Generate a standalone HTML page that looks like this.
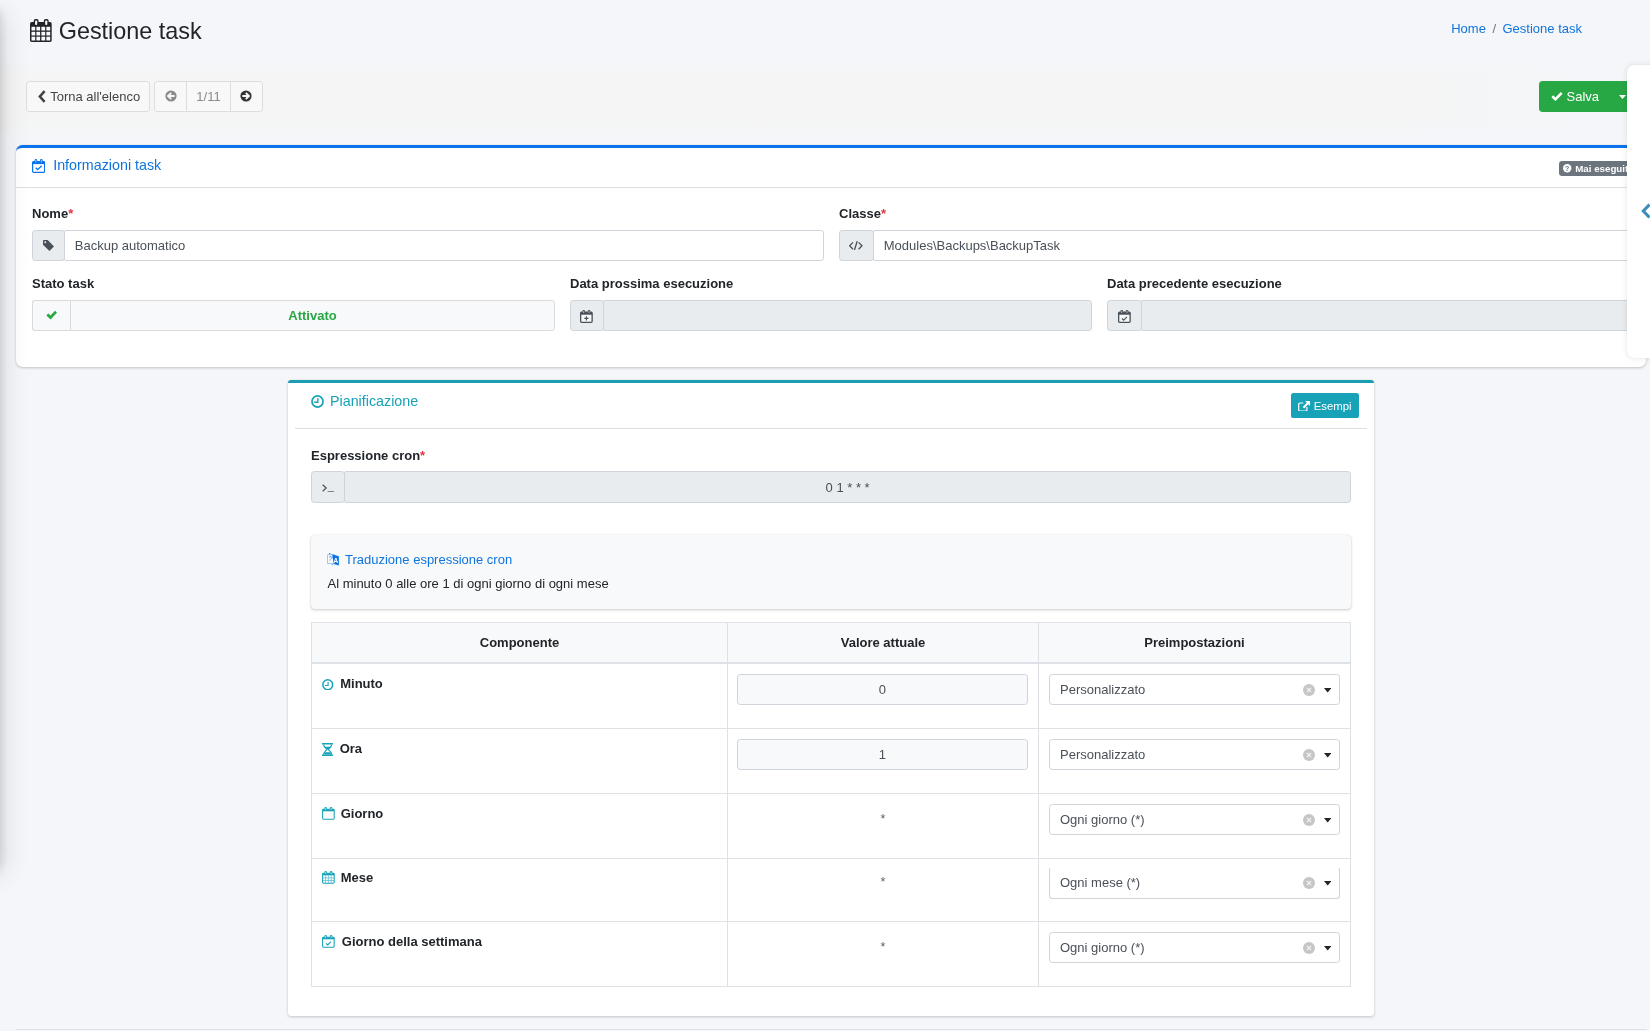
<!DOCTYPE html>
<html lang="it">
<head>
<meta charset="utf-8">
<title>Gestione task</title>
<style>
*{box-sizing:border-box}
html{font-size:13px}
body{margin:0;width:1650px;height:1031px;overflow:hidden;position:relative;background:#f4f6f9;color:#212529;
  font-family:"Liberation Sans",Arial,Helvetica,sans-serif;font-size:13px;line-height:1.5}
a{color:#1074dd;text-decoration:none}
svg{display:block}
.abs{position:absolute}
/* left sidebar shadow */
#sideshadow{z-index:5;position:absolute;left:-250px;top:0;width:250px;height:859px;background:#343a40;
  box-shadow:0 14px 28px rgba(0,0,0,.16),0 10px 10px rgba(0,0,0,.14)}
/* header */
#title{position:absolute;left:30px;top:14px;height:35px;display:flex;align-items:center;font-size:23.4px;line-height:1.2;color:#212529}
#title svg{margin-right:7px;margin-top:-2px}
#crumb{position:absolute;right:68px;top:19px;font-size:13px;line-height:19.5px;white-space:nowrap}
#crumb span{color:#6c757d;padding:0 6.5px}
/* toolbar */
.btn{position:absolute;top:81px;height:31px;border:1px solid #ddd;background:#f8f8f8;color:#444;border-radius:3.25px;
  font-size:13px;line-height:19.5px;padding:4.875px 9.75px;white-space:nowrap;display:flex;align-items:center}
.btn svg{margin-right:4px;flex:none}
/* cards */
.card{position:absolute;background:#fff;border-radius:6.5px;box-shadow:0 0 1px rgba(0,0,0,.125),0 1px 3px rgba(0,0,0,.2)}
.card-title{position:absolute;font-size:14.3px;line-height:1.2;display:flex;align-items:center;white-space:nowrap}
label{position:absolute;font-weight:700;font-size:13px;line-height:19.5px;white-space:nowrap;color:#212529}
label i{color:#dc3545;font-style:normal}
.ig{position:absolute;height:31px;display:flex}
.ig .pre{flex:0 0 auto;background:#e9ecef;border:1px solid #ced4da;border-right:0;border-radius:3.25px 0 0 3.25px;display:flex;align-items:center;justify-content:center;color:#495057}
.ig .pre.r{border-right:1px solid #ced4da;border-radius:3.25px}
.ig .pre.r+.fc{margin-left:-1px;border-radius:2px 3.25px 3.25px 2px}
.ig .fc{flex:1 1 auto;background:#fff;border:1px solid #ced4da;border-radius:0 3.25px 3.25px 0;color:#495057;font-size:13px;line-height:19.5px;padding:4.875px 9.75px;white-space:nowrap;overflow:hidden}
.ig .fc.dis{background:#e9ecef}
</style>
</head>
<body>
<div id="wrap" style="position:absolute;left:0;top:0;width:1650px;height:1031px;will-change:transform;overflow:hidden">
<div id="sideshadow"></div>

<div class="abs" style="left:0;top:62px;width:1650px;height:72px;background:linear-gradient(90deg,#f5f5f5 0,#f5f5f5 84%,#f4f6f9 97%)"><div class="abs" style="left:0;top:0;width:100%;height:14px;background:linear-gradient(180deg,#f4f6f9,rgba(244,246,249,0))"></div><div class="abs" style="left:0;bottom:0;width:100%;height:14px;background:linear-gradient(0deg,#f4f6f9,rgba(244,246,249,0))"></div></div>
<div id="title">
<svg width="21.7" height="23" viewBox="0 0 21.7 23"><rect x="0" y="3" width="21.7" height="20" rx="1.7" fill="#212529"/><g fill="#f9fafc"><rect x="1.5" y="7.8" width="3.7" height="3.7"/><rect x="6.4" y="7.8" width="3.7" height="3.7"/><rect x="11.4" y="7.8" width="3.8" height="3.7"/><rect x="16.4" y="7.8" width="3.8" height="3.7"/><rect x="1.5" y="12.8" width="3.7" height="3.7"/><rect x="6.4" y="12.8" width="3.7" height="3.7"/><rect x="11.4" y="12.8" width="3.8" height="3.7"/><rect x="16.4" y="12.8" width="3.8" height="3.7"/><rect x="1.5" y="17.7" width="3.7" height="3.8"/><rect x="6.4" y="17.7" width="3.7" height="3.8"/><rect x="11.4" y="17.7" width="3.8" height="3.8"/><rect x="16.4" y="17.7" width="3.8" height="3.8"/></g><rect x="3.7" y="0" width="4.9" height="6.6" rx="1.9" fill="#212529"/><rect x="13.8" y="0" width="4.9" height="6.6" rx="1.9" fill="#212529"/><rect x="5.1" y="1.4" width="2.1" height="4.5" rx=".9" fill="#f9fafc"/><rect x="15.2" y="1.4" width="2.1" height="4.5" rx=".9" fill="#f9fafc"/></svg>
<span>Gestione task</span>
</div>
<div id="crumb"><a>Home</a><span>/</span><a>Gestione task</a></div>

<!-- toolbar -->
<div class="btn" style="left:26px;width:123.5px;padding-left:11px"><svg width="8" height="13" viewBox="0 0 8 13" style="margin-right:4.2px;margin-top:-1px"><path d="M6.600 1.200 L1.900 6.500 L6.600 11.800" fill="none" stroke="#444" stroke-width="2.600" stroke-linejoin="miter"/></svg>Torna all'elenco</div>
<div class="btn" style="left:154px;width:33px;border-radius:3.25px 0 0 3.25px;padding:0;justify-content:center"><svg width="12" height="12" viewBox="0 0 12 12" style="margin:-1px 0 0 0"><circle cx="6" cy="6" r="5.6" fill="#8a8a8a"/><path d="M9.6 6H3.4M6.2 2.8 3 6 6.200 9.200" fill="none" stroke="#f8f8f8" stroke-width="1.9"/></svg></div>
<div class="btn" style="left:186px;width:45px;border-radius:0;padding:0;justify-content:center;color:#8a8a8a">1/11</div>
<div class="btn" style="left:230px;width:32.5px;border-radius:0 3.25px 3.25px 0;padding:0;justify-content:center"><svg width="12" height="12" viewBox="0 0 12 12" style="margin:-1px 0 0 0"><circle cx="6" cy="6" r="5.6" fill="#333"/><path d="M2.4 6H8.6M5.800 2.800 9 6 5.800 9.200" fill="none" stroke="#f8f8f8" stroke-width="1.9"/></svg></div>

<div class="btn" style="left:1539px;width:75px;background:#28a745;border-color:#28a745;color:#fff;border-radius:3.25px 0 0 3.25px;padding-left:10.5px"><svg width="12" height="10" viewBox="0 0 12 10" style="margin-right:4px;margin-top:-1px"><path d="M1.3 5.300 4.400 8.300 10.700 1.800" fill="none" stroke="#fff" stroke-width="2.600"/></svg>Salva</div>
<div class="btn" style="left:1613px;width:30px;background:#28a745;border-color:#28a745;border-radius:0 3.25px 3.25px 0;padding:0"><svg width="7" height="4" viewBox="0 0 7 4" style="margin:0 0 0 5px"><path d="M0 0h7L3.500 4z" fill="#fff"/></svg></div>

<!-- card 1 -->
<div class="card" style="left:16px;top:145px;width:1630px;height:222px;border-top:3px solid #0a73eb">
  <div class="card-title" style="left:16px;top:9px;color:#1074dd"><svg width="13.2" height="14" viewBox="0 0 13.2 14" style="margin-right:8px"><rect x=".6" y="2.6" width="12" height="10.8" rx="1" fill="none" stroke="#0a73eb" stroke-width="1.2"/><rect x=".6" y="2.6" width="12" height="2.5" fill="#0a73eb"/><rect x="2.6" y="0" width="2.6" height="4.2" rx="1.2" fill="#0a73eb"/><rect x="8" y="0" width="2.6" height="4.2" rx="1.2" fill="#0a73eb"/><rect x="3.5" y="1" width=".8" height="2.4" rx=".4" fill="#fff" opacity=".8"/><rect x="8.9" y="1" width=".8" height="2.4" rx=".4" fill="#fff" opacity=".8"/><path d="M3.7 8.8 5.7 10.7 9.7 6.7" fill="none" stroke="#0a73eb" stroke-width="1.3"/></svg>Informazioni task</div>
  <div class="abs" style="left:0;top:39px;width:1630px;height:1px;background:rgba(0,0,0,.125)"></div>
  <div class="abs" style="left:1543px;top:13px;height:15px;background:#6c757d;color:#fff;font-weight:700;font-size:9.75px;line-height:15px;border-radius:3.25px;padding:0 5px 0 4.200px;white-space:nowrap;display:flex;align-items:center"><svg width="8.400" height="8.400" viewBox="0 0 9 9" style="margin-right:3.600px"><circle cx="4.500" cy="4.500" r="4.500" fill="#fff"/><text x="4.500" y="7.400" font-size="7.500" font-weight="700" text-anchor="middle" fill="#6c757d" font-family="Liberation Sans, sans-serif">?</text></svg>Mai eseguito</div>

  <label style="left:16px;top:56px">Nome<i>*</i></label>
  <div class="ig" style="left:16px;top:82px;width:792px"><div class="pre r" style="width:33px"><svg width="11" height="11" viewBox="0 0 11 11" style="margin:-1px 0 0 -1px"><path d="M.9 0H4.700L11 6.400 6.400 11 0 4.700V.9Q0 0 .9 0Z" fill="#495057"/><circle cx="2.300" cy="2.300" r=".95" fill="#e9ecef"/></svg></div><div class="fc">Backup automatico</div></div>
  <label style="left:823px;top:56px">Classe<i>*</i></label>
  <div class="ig" style="left:823px;top:82px;width:791px"><div class="pre r" style="width:35px"><svg width="13.6" height="9.8" viewBox="0 0 13.6 9.8" style="margin:0 0 0 -1px"><path d="M4 1.400.6 4.800 4 8.200M9.600 1.400 13 4.800 9.600 8.200M8.200.2 5.300 9.600" fill="none" stroke="#495057" stroke-width="1.3"/></svg></div><div class="fc">Modules\Backups\BackupTask</div></div>

  <label style="left:16px;top:126px">Stato task</label>
  <div class="ig" style="left:16px;top:152px;width:523px"><div class="pre" style="width:38px;background:#f8f9fa;border-color:#d9dadc"><svg width="11.3" height="9.2" viewBox="0 0 11.3 9.2" style="margin:-1px 0 0 0"><path d="M1.300 4.500 4.500 7.500 10 1.700" fill="none" stroke="#28a745" stroke-width="2.700"/></svg></div><div class="fc" style="background:#f8f9fa;border-color:#d9dadc;color:#28a745;font-weight:700;text-align:center">Attivato</div></div>
  <label style="left:554px;top:126px">Data prossima esecuzione</label>
  <div class="ig" style="left:554px;top:152px;width:522px"><div class="pre r" style="width:33.5px"><svg width="12.8" height="13" viewBox="0 0 12.8 13" style="margin-top:1.5px"><rect x=".65" y="2.2" width="11.5" height="10.15" rx="1" fill="#f6f7f9" stroke="#495057" stroke-width="1.3"/><rect x=".65" y="2.2" width="11.5" height="2.5" fill="#495057"/><rect x="2.5" y="0" width="2.5" height="3.8" rx="1.1" fill="#495057"/><rect x="7.8" y="0" width="2.5" height="3.8" rx="1.1" fill="#495057"/><rect x="3.35" y="1" width=".8" height="2.2" rx=".4" fill="#fff" opacity=".75"/><rect x="8.65" y="1" width=".8" height="2.2" rx=".4" fill="#fff" opacity=".75"/><path d="M6.400 6.300v4.200M4.300 8.400h4.200" stroke="#495057" stroke-width="1.100"/></svg></div><div class="fc dis"></div></div>
  <label style="left:1091px;top:126px">Data precedente esecuzione</label>
  <div class="ig" style="left:1091px;top:152px;width:523px"><div class="pre r" style="width:34.5px"><svg width="12.8" height="13" viewBox="0 0 12.8 13" style="margin-top:1.5px"><rect x=".65" y="2.2" width="11.5" height="10.15" rx="1" fill="#f6f7f9" stroke="#495057" stroke-width="1.3"/><rect x=".65" y="2.2" width="11.5" height="2.5" fill="#495057"/><rect x="2.5" y="0" width="2.5" height="3.8" rx="1.1" fill="#495057"/><rect x="7.8" y="0" width="2.5" height="3.8" rx="1.1" fill="#495057"/><rect x="3.35" y="1" width=".8" height="2.2" rx=".4" fill="#fff" opacity=".75"/><rect x="8.65" y="1" width=".8" height="2.2" rx=".4" fill="#fff" opacity=".75"/><path d="M3.900 8.500 5.700 10.200 8.900 6.800" fill="none" stroke="#495057" stroke-width="1.100"/></svg></div><div class="fc dis"></div></div>
</div>

<!-- card 2 -->
<style>
.s2{position:absolute;left:10px;width:290.5px;height:31px;border:1px solid #ced4da;border-radius:3.25px;background:#fff;color:#495057;font-size:13px;line-height:29px;padding-left:10px;white-space:nowrap}
.s2 .clr{position:absolute;left:252.500px;top:9px}
.s2 .car{position:absolute;left:273.500px;top:13.200px}
.tb{position:absolute;left:23px;top:239px;width:1040px;height:365px;border:1px solid #dee2e6}
.tb .r{position:absolute;left:0;width:1038px;border-top:1px solid #dee2e6}
.tb .c{position:absolute;top:0;height:100%}
.tb .c1{left:0;width:416px;border-right:1px solid #dee2e6}
.tb .c2{left:416px;width:311px;border-right:1px solid #dee2e6}
.tb .c3{left:727px;width:311px}
.tb .h{font-weight:700;text-align:center;line-height:39px;color:#212529}
.tb .nm{position:absolute;left:10px;top:10px;font-weight:700;line-height:19.5px;display:flex;align-items:center;white-space:nowrap}
.tb .in{position:absolute;left:9px;top:10px;width:290.5px;height:31px;border:1px solid #ced4da;border-radius:3.25px;background:#f8f9fa;color:#495057;text-align:center;line-height:29px}
.tb .st{position:absolute;left:0;width:100%;top:16.500px;text-align:center;font-size:12.500px;line-height:17px;color:#5a6068}
</style>
<div class="card" style="left:288px;top:380px;width:1086px;height:636px;border-top:3px solid #1a9db3;border-radius:3.250px">
  <div class="card-title" style="left:23px;top:10px;color:#17a2b8"><svg width="13" height="13" viewBox="0 0 13 13" style="margin-right:6px"><circle cx="6.5" cy="6.5" r="5.55" fill="none" stroke="#17a2b8" stroke-width="1.7"/><path d="M6.85 2.99V7.25H3.25" fill="none" stroke="#17a2b8" stroke-width="1.3"/></svg>Pianificazione</div>
  <div class="abs" style="left:1003px;top:10px;width:68px;height:25px;background:#17a2b8;color:#fff;border-radius:2.600px;font-size:11.375px;line-height:25px;white-space:nowrap;display:flex;align-items:center;padding:1.500px 0 0 7px"><svg width="12" height="10.500" viewBox="0 0 12 10.500" style="margin-right:3.700px;margin-top:-1px"><path d="M8.900 6v2.700a1.300 1.300 0 0 1-1.300 1.300H2A1.300 1.300 0 0 1 .7 8.700V3.300A1.300 1.300 0 0 1 2 2h3.300" fill="none" stroke="#fff" stroke-width="1.200"/><path d="M7 0h5v5L10.300 3.300 6.200 7.400 4.700 5.900 8.800 1.800z" fill="#fff"/></svg>Esempi</div>
  <div class="abs" style="left:7px;top:45px;width:1072px;height:1px;background:rgba(0,0,0,.125)"></div>

  <label style="left:23px;top:63px">Espressione cron<i>*</i></label>
  <div class="ig" style="left:23px;top:88px;width:1040px;height:32px"><div class="pre r" style="width:34px"><svg width="12.700" height="8.500" viewBox="0 0 12.700 8.500" style="margin-top:1.500px"><path d="M.7.700 4.200 4 .7 7.300" fill="none" stroke="#495057" stroke-width="1.200"/><path d="M5.600 7.900h6.800" stroke="#495057" stroke-width="1.100"/></svg></div><div class="fc dis" style="text-align:center;padding:5.500px 9.750px 4px 10px">0 1 * * *</div></div>

  <div class="abs" style="left:23px;top:151.500px;width:1040px;height:74.500px;background:#f8f9fa;border-radius:4px;box-shadow:0 0 1px rgba(0,0,0,.125),0 1px 3px rgba(0,0,0,.2)">
    <div class="abs" style="left:16px;top:15.500px;color:#1074dd;line-height:19.500px;white-space:nowrap;display:flex;align-items:center"><svg width="12.200" height="13" viewBox="0 0 12.200 13" style="margin-right:5.800px"><path d="M.5 1.700H7.300V10.500H.5z" fill="none" stroke="#9ec8f4" stroke-width="1"/><path d="M2 0 4.800 1.300H2z" fill="#0a73eb"/><path d="M2 4h3.600M3.800 3v1M2.300 7.300c1.600-.6 2.600-1.700 3-3.300" fill="none" stroke="#5a9fea" stroke-width=".8"/><path d="M5.200 1.300 11.900 3.200V12.600L6.700 11z" fill="#0a73eb"/><text x="8.900" y="10.400" font-size="6.500" font-weight="700" fill="#fff" text-anchor="middle" font-family="Liberation Sans, sans-serif">A</text><path d="M4 11.200 6.700 11 5.600 13z" fill="#9ec8f4"/></svg>Traduzione espressione cron</div>
    <div class="abs" style="left:16.500px;top:39.500px;color:#212529;line-height:19.500px;white-space:nowrap">Al minuto 0 alle ore 1 di ogni giorno di ogni mese</div>
  </div>

  <div class="tb">
    <div class="abs" style="left:0;top:0;width:1038px;height:39px;background:#f8f9fa"></div>
    <div class="c c1"><div class="h">Componente</div></div>
    <div class="c c2"><div class="h">Valore attuale</div></div>
    <div class="c c3"><div class="h">Preimpostazioni</div></div>
    <div class="r" style="top:39px;height:65px;border-top:2px solid #dee2e6"><div class="c c1"><div class="nm"><svg width="11.5" height="11.5" viewBox="0 0 11.5 11.5" style="margin-top:1px;margin-right:6.7px"><circle cx="5.75" cy="5.75" r="4.90" fill="none" stroke="#17a2b8" stroke-width="1.5"/><path d="M6.10 2.65V6.50H2.88" fill="none" stroke="#17a2b8" stroke-width="1.1"/></svg>Minuto</div></div><div class="c c2"><div class="in">0</div></div><div class="c c3"><div class="s2" style="top:10px">Personalizzato<svg class="clr" width="12" height="12" viewBox="0 0 12 12"><circle cx="6" cy="6" r="6" fill="#c6c6c6"/><path d="M3.900 3.900 8.100 8.100M8.100 3.900 3.900 8.100" stroke="#f4f4f4" stroke-width="1.300"/></svg><svg class="car" width="7.400" height="4.600" viewBox="0 0 7.400 4.600"><path d="M0 0h7.400L3.700 4.600z" fill="#212529"/></svg></div></div></div>
    <div class="r" style="top:105px;height:65px"><div class="c c1"><div class="nm" style="top:10px"><svg width="11.300" height="13" viewBox="0 0 11.300 13" style="margin-right:6.400px;margin-top:1px"><path d="M0 0h11.300v1.400H0zM0 11.600h11.300V13H0z" fill="#17a2b8"/><path d="M1.700 1.400c0 2.700 2.500 3.700 3.100 5.100-.6 1.400-3.100 2.400-3.100 5.100M9.600 1.400c0 2.700-2.500 3.700-3.100 5.100.6 1.400 3.100 2.400 3.100 5.100" fill="none" stroke="#17a2b8" stroke-width="1.200"/><path d="M2.300 3.700h6.700C8.300 5 6.600 5.600 5.650 6.700 4.700 5.600 3 5 2.300 3.700zM1.900 11.600c.2-1.100.8-1.800 1.500-2.400h4.500c.7.600 1.300 1.300 1.500 2.400z" fill="#17a2b8"/></svg>Ora</div></div><div class="c c2"><div class="in">1</div></div><div class="c c3"><div class="s2" style="top:10px">Personalizzato<svg class="clr" width="12" height="12" viewBox="0 0 12 12"><circle cx="6" cy="6" r="6" fill="#c6c6c6"/><path d="M3.900 3.900 8.100 8.100M8.100 3.900 3.900 8.100" stroke="#f4f4f4" stroke-width="1.300"/></svg><svg class="car" width="7.400" height="4.600" viewBox="0 0 7.400 4.600"><path d="M0 0h7.400L3.700 4.600z" fill="#212529"/></svg></div></div></div>
    <div class="r" style="top:170px;height:65px"><div class="c c1"><div class="nm" style="top:10px"><svg width="12.8" height="12.8" viewBox="0 0 12.8 12.8" style="margin-right:5.900px"><rect x=".6" y="2.300" width="11.600" height="9.900" rx=".9" fill="none" stroke="#17a2b8" stroke-width="1.05"/><rect x=".6" y="2.300" width="11.600" height="2" fill="#17a2b8"/><rect x="2.500" y="0" width="2.400" height="3.700" rx="1.100" fill="#17a2b8"/><rect x="7.900" y="0" width="2.400" height="3.700" rx="1.100" fill="#17a2b8"/><rect x="3.300" y=".9" width=".8" height="2.200" rx=".4" fill="#fff" opacity=".8"/><rect x="8.700" y=".9" width=".8" height="2.200" rx=".4" fill="#fff" opacity=".8"/></svg>Giorno</div></div><div class="c c2"><div class="st">*</div></div><div class="c c3"><div class="s2" style="top:10px">Ogni giorno (*)<svg class="clr" width="12" height="12" viewBox="0 0 12 12"><circle cx="6" cy="6" r="6" fill="#c6c6c6"/><path d="M3.900 3.900 8.100 8.100M8.100 3.900 3.900 8.100" stroke="#f4f4f4" stroke-width="1.300"/></svg><svg class="car" width="7.400" height="4.600" viewBox="0 0 7.400 4.600"><path d="M0 0h7.400L3.700 4.600z" fill="#212529"/></svg></div></div></div>
    <div class="r" style="top:235px;height:64px"><div class="c c1"><div class="nm" style="top:8.500px"><svg width="12.8" height="12.8" viewBox="0 0 12.8 12.8" style="margin-right:5.900px"><rect x=".6" y="2.300" width="11.600" height="9.900" rx=".9" fill="none" stroke="#17a2b8" stroke-width="1.05"/><rect x=".6" y="2.300" width="11.600" height="2" fill="#17a2b8"/><rect x="2.500" y="0" width="2.400" height="3.700" rx="1.100" fill="#17a2b8"/><rect x="7.900" y="0" width="2.400" height="3.700" rx="1.100" fill="#17a2b8"/><rect x="3.300" y=".9" width=".8" height="2.200" rx=".4" fill="#fff" opacity=".8"/><rect x="8.700" y=".9" width=".8" height="2.200" rx=".4" fill="#fff" opacity=".8"/><path d="M3.600 4.300v7.900M6.400 4.300v7.900M9.200 4.300v7.900M.6 6.900h11.600M.6 9.500h11.600" stroke="#17a2b8" stroke-width=".7" opacity=".75"/></svg>Mese</div></div><div class="c c2"><div class="st" style="top:15px">*</div></div><div class="c c3"><div class="s2" style="top:8px;height:32px;border-top-color:transparent">Ogni mese (*)<svg class="clr" width="12" height="12" viewBox="0 0 12 12"><circle cx="6" cy="6" r="6" fill="#c6c6c6"/><path d="M3.900 3.900 8.100 8.100M8.100 3.900 3.900 8.100" stroke="#f4f4f4" stroke-width="1.300"/></svg><svg class="car" width="7.400" height="4.600" viewBox="0 0 7.400 4.600"><path d="M0 0h7.400L3.700 4.600z" fill="#212529"/></svg></div></div></div>
    <div class="r" style="top:298px;height:65px"><div class="c c1"><div class="nm" style="top:10px"><svg width="12.8" height="12.8" viewBox="0 0 12.8 12.8" style="margin-right:7px"><rect x=".6" y="2.300" width="11.600" height="9.900" rx=".9" fill="none" stroke="#17a2b8" stroke-width="1.05"/><rect x=".6" y="2.300" width="11.600" height="2" fill="#17a2b8"/><rect x="2.500" y="0" width="2.400" height="3.700" rx="1.100" fill="#17a2b8"/><rect x="7.900" y="0" width="2.400" height="3.700" rx="1.100" fill="#17a2b8"/><rect x="3.300" y=".9" width=".8" height="2.200" rx=".4" fill="#fff" opacity=".8"/><rect x="8.700" y=".9" width=".8" height="2.200" rx=".4" fill="#fff" opacity=".8"/><path d="M3.900 8.300 5.700 10 8.900 6.600" fill="none" stroke="#17a2b8" stroke-width="1.100"/></svg>Giorno della settimana</div></div><div class="c c2"><div class="st">*</div></div><div class="c c3"><div class="s2" style="top:10px">Ogni giorno (*)<svg class="clr" width="12" height="12" viewBox="0 0 12 12"><circle cx="6" cy="6" r="6" fill="#c6c6c6"/><path d="M3.900 3.900 8.100 8.100M8.100 3.900 3.900 8.100" stroke="#f4f4f4" stroke-width="1.300"/></svg><svg class="car" width="7.400" height="4.600" viewBox="0 0 7.400 4.600"><path d="M0 0h7.400L3.700 4.600z" fill="#212529"/></svg></div></div></div>
  </div>
</div>

<!-- footer line -->
<div class="abs" style="left:16px;top:1029px;width:1631px;height:1px;background:#dee2e6"></div>

<!-- right panel -->
<div class="abs" style="left:1626.500px;top:65px;width:40px;height:292.700px;background:#fff;border-radius:6.5px;box-shadow:0 0 1px rgba(0,0,0,.1),0 0 6px rgba(0,0,0,.1)"></div>
<svg class="abs" style="left:1641px;top:203px" width="9" height="16" viewBox="0 0 9 16"><path d="M8.500 1.500 2.300 8l6.200 6.500" fill="none" stroke="#3c8dbc" stroke-width="3.100"/></svg>

</div>
</body>
</html>
